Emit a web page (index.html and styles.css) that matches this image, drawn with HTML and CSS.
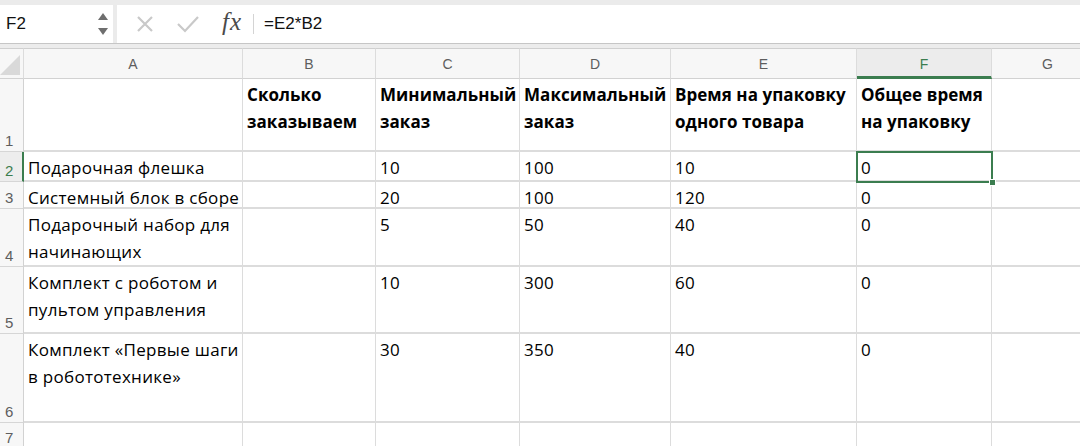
FILE: index.html
```html
<!DOCTYPE html>
<html lang="ru">
<head>
<meta charset="utf-8">
<link rel="stylesheet" href="styles.css">
</head>
<body>
<div class="toolbar">
  <div class="bar">
    <div class="namebox">
      <span class="name">F2</span>
      <svg class="spin" width="12" height="24" viewBox="0 0 12 24"><polygon points="6,1 11,8 1,8" fill="#6e6e6e"/><polygon points="1,16 11,16 6,23" fill="#6e6e6e"/></svg>
    </div>
    <div class="formula">
      <svg class="ico-x" width="18" height="18" viewBox="0 0 18 18"><path d="M2 2 L16 16 M16 2 L2 16" stroke="#c9c9c9" stroke-width="2.2" fill="none"/></svg>
      <svg class="ico-check" width="22" height="18" viewBox="0 0 22 18"><path d="M1 9 L8 16 L21 2" stroke="#c9c9c9" stroke-width="2.2" fill="none"/></svg>
      <span class="fx">fx</span>
      <span class="sep"></span>
      <span class="ftext">=E2*B2</span>
    </div>
  </div>
  <div class="barfoot"></div>
</div>
<div class="sheet">
  <div class="h corner"><svg width="22" height="22" viewBox="0 0 22 22"><polygon points="0,21 20,1 20,21" fill="#d9d9d9"/></svg></div>
  <div class="h">A</div><div class="h">B</div><div class="h">C</div><div class="h">D</div><div class="h">E</div><div class="h hsel">F</div><div class="h">G</div>

  <div class="r">1</div>
  <div class="c"></div>
  <div class="c b">Сколько<br>заказываем</div>
  <div class="c b">Минимальный<br>заказ</div>
  <div class="c b">Максимальный<br>заказ</div>
  <div class="c b">Время на упаковку<br>одного товара</div>
  <div class="c b">Общее время<br>на упаковку</div>
  <div class="c"></div>

  <div class="r rsel">2</div>
  <div class="c">Подарочная флешка</div>
  <div class="c"></div>
  <div class="c">10</div>
  <div class="c">100</div>
  <div class="c">10</div>
  <div class="c active">0<span class="sel"><span class="handle"></span></span></div>
  <div class="c"></div>

  <div class="r">3</div>
  <div class="c">Системный блок в сборе</div>
  <div class="c"></div>
  <div class="c">20</div>
  <div class="c">100</div>
  <div class="c">120</div>
  <div class="c">0</div>
  <div class="c"></div>

  <div class="r">4</div>
  <div class="c">Подарочный набор для<br>начинающих</div>
  <div class="c"></div>
  <div class="c">5</div>
  <div class="c">50</div>
  <div class="c">40</div>
  <div class="c">0</div>
  <div class="c"></div>

  <div class="r">5</div>
  <div class="c">Комплект с роботом и<br>пультом управления</div>
  <div class="c"></div>
  <div class="c">10</div>
  <div class="c">300</div>
  <div class="c">60</div>
  <div class="c">0</div>
  <div class="c"></div>

  <div class="r">6</div>
  <div class="c">Комплект «Первые шаги<br>в робототехнике»</div>
  <div class="c"></div>
  <div class="c">30</div>
  <div class="c">350</div>
  <div class="c">40</div>
  <div class="c">0</div>
  <div class="c"></div>

  <div class="r rlast">7</div>
  <div class="c"></div><div class="c"></div><div class="c"></div><div class="c"></div><div class="c"></div><div class="c"></div><div class="c"></div>
</div>
</body>
</html>
```
FILE: styles.css
```css
* { box-sizing: border-box; }
html, body { margin: 0; padding: 0; }
body {
  width: 1080px;
  height: 446px;
  overflow: hidden;
  background: #ffffff;
  font-family: "Open Sans", "Liberation Sans", sans-serif;
}
.toolbar {
  background: #ebebeb;
  padding-top: 5px;
}
.bar {
  display: flex;
  height: 38px;
  gap: 4px;
}
.namebox {
  width: 113px;
  background: #ffffff;
  display: flex;
  align-items: center;
  justify-content: space-between;
  padding: 0 4px 0 6px;
}
.name {
  font-family: "Liberation Sans", sans-serif;
  font-size: 17px;
  color: #111;
}
.formula {
  flex: 1;
  background: #ffffff;
  display: flex;
  align-items: center;
  padding-left: 19px;
}
.ico-x { margin-right: 23px; }
.ico-check { margin-right: 23px; }
.fx {
  font-family: "Liberation Serif", serif;
  font-style: italic;
  font-size: 25px;
  color: #4a4a4a;
  margin-top: -4px;
  letter-spacing: 1px;
}
.sep {
  width: 1px;
  height: 20px;
  background: #d4d4d4;
  margin: 0 10px 0 11px;
}
.ftext {
  font-family: "Liberation Sans", sans-serif;
  font-size: 17px;
  color: #111;
}
.barfoot {
  height: 5px;
  border-top: 1px solid #c6c6c6;
  background: #ececec;
}
.sheet {
  display: grid;
  width: 1104px;
  grid-template-columns: 24px 219px 133px 144px 151px 186px 135px 112px;
  grid-template-rows: 31px 73px 30px 27px 58px 67px 89px 40px;
}
.h {
  background: #f7f7f7;
  border-top: 1px solid #cfcfcf;
  border-right: 1px solid #dcdcdc;
  border-bottom: 1px solid #d2d2d2;
  display: flex;
  align-items: center;
  justify-content: center;
  font-family: "Liberation Sans", sans-serif;
  font-size: 14px;
  color: #5e5e5e;
}
.corner {
  align-items: flex-end;
  justify-content: flex-start;
  padding-bottom: 2px;
}
.corner svg { display: block; }
.hsel {
  background: #ececec;
  color: #3b7d4f;
  border-bottom: 3px solid #3b7d4f;
  padding-top: 2px;
}
.r {
  background: #f7f7f7;
  border-right: 1px solid #d2d2d2;
  border-bottom: 1px solid #d6d6d6;
  display: flex;
  align-items: flex-end;
  padding: 0 0 2px 5px;
  font-family: "Liberation Sans", sans-serif;
  font-size: 15px;
  color: #5e5e5e;
}
.rsel {
  color: #3b7d4f;
  background: #ededed;
  border-right: 2px solid #3b7d4f;
}
.rlast {
  align-items: flex-start;
  padding-top: 6px;
}
.c {
  border-right: 1px solid #dcdcdc;
  border-bottom: 2px solid #dcdcdc;
  padding: 2px 4px 0 4px;
  font-size: 17px;
  letter-spacing: 0.3px;
  line-height: 27px;
  color: #000;
  white-space: nowrap;
  overflow: hidden;
}
.b {
  font-weight: 700;
  letter-spacing: 0.05px;
}
.active {
  position: relative;
  overflow: visible;
}
.sel {
  position: absolute;
  left: -1px;
  top: -1px;
  width: 137px;
  height: 32px;
  border: 2px solid #3b7d4f;
  z-index: 2;
}
.handle {
  position: absolute;
  right: -5px;
  bottom: -5px;
  width: 7px;
  height: 7px;
  background: #3b7d4f;
  border: 1px solid #ffffff;
}
```
